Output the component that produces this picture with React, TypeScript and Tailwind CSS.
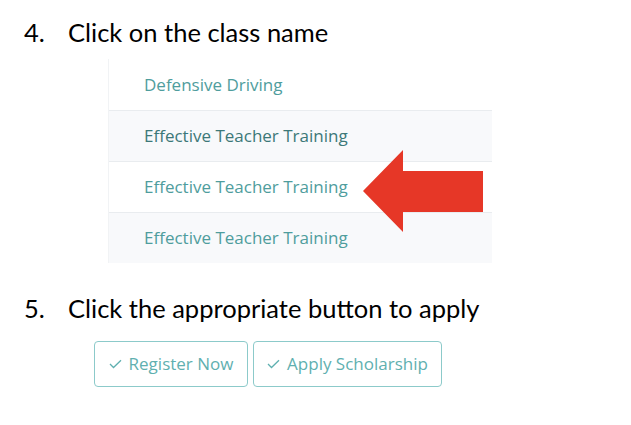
import React from "react";

const classes = [
  { name: "Defensive Driving", striped: false, dark: false },
  { name: "Effective Teacher Training", striped: true, dark: true },
  { name: "Effective Teacher Training", striped: false, dark: false, arrow: true },
  { name: "Effective Teacher Training", striped: true, dark: false },
];

const Step = ({ num, children }: any) => (
  <div className="flex items-center text-[25.5px] leading-[32px] text-black font-['Lato',sans-serif]">
    <span className="w-[44px]">{num}</span>
    <span>{children}</span>
  </div>
);

const Check = () => (
  <svg width="13" height="10" viewBox="0 0 13 10" className="mr-[7px]">
    <path d="M1 5 L4.5 8.5 L12 1.2" fill="none" stroke="#5fb0b0" strokeWidth="1.3" />
  </svg>
);

const Arrow = () => (
  <svg width="122" height="84" viewBox="0 0 122 84" className="absolute z-10 left-[254px] top-[-12px]">
    <polygon points="0,41 40,0 40,21 120,21 120,62 40,62 40,82" fill="#e63727" />
  </svg>
);

const App = () => {
  return (
    <div className="w-[631px] h-[425px] bg-white pl-[24px] pt-[16px] font-['Open_Sans',sans-serif]">
      <Step num="4.">Click on the class name</Step>

      <div className="ml-[84px] mt-[11px] w-[384px] border-l border-[#f1f3f5]">
        {classes.map((c, i) => (
          <div
            key={i}
            className={`relative h-[51px] flex items-center pl-[35px] text-[17px] ${
              i > 0 ? "border-t border-[#e9ecef]" : ""
            } ${c.striped ? "bg-[#f8f9fb]" : "bg-white"} ${
              c.dark ? "text-[#3c7878]" : "text-[#4f9d9d]"
            }`}
          >
            {c.name}
            {c.arrow && <Arrow />}
          </div>
        ))}
      </div>

      <div className="mt-[29px]">
        <Step num="5.">Click the appropriate button to apply</Step>
      </div>

      <div className="flex gap-[5px] ml-[70px] mt-[17px]">
        <button className="w-[154px] h-[46px] flex items-center justify-center border border-[#8ccaca] rounded-[4px] text-[17px] text-[#5fb0b0]">
          <Check />
          Register Now
        </button>
        <button className="w-[189px] h-[46px] flex items-center justify-center border border-[#8ccaca] rounded-[4px] text-[17px] text-[#5fb0b0]">
          <Check />
          Apply Scholarship
        </button>
      </div>
    </div>
  );
};

export default App;
